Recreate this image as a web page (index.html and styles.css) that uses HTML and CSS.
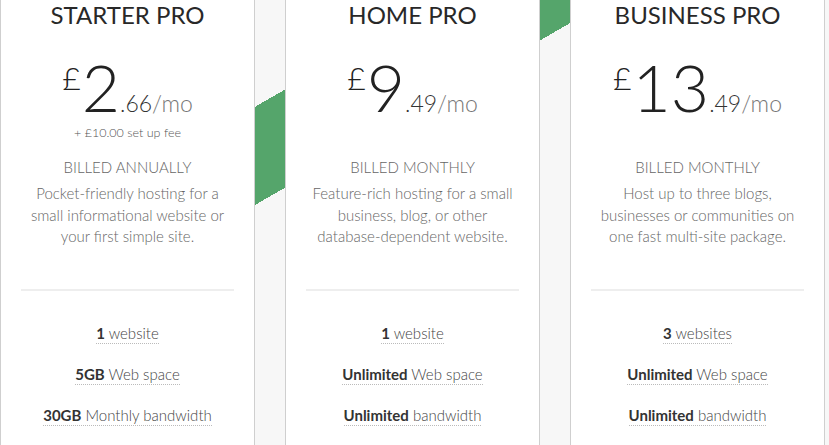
FILE: index.html
```html
<!DOCTYPE html>
<html lang="en">
<head>
<meta charset="utf-8">
<title>Pricing</title>
<link rel="stylesheet" href="styles.css">
</head>
<body>
<main class="pricing">
  <section class="plan">
    <h2 class="plan-name">STARTER PRO</h2>
    <div class="price"><span class="cur">£</span><span class="int">2</span><span class="dec">.66</span><span class="per">/mo</span></div>
    <p class="fee">+ £10.00 set up fee</p>
    <p class="billing">BILLED ANNUALLY</p>
    <p class="desc">Pocket-friendly hosting for a small informational website or your first simple site.</p>
    <hr class="divider">
    <ul class="features">
      <li><span class="feat"><b>1</b> website</span></li>
      <li><span class="feat"><b>5GB</b> Web space</span></li>
      <li><span class="feat"><b>30GB</b> Monthly bandwidth</span></li>
    </ul>
  </section>
  <section class="plan">
    <h2 class="plan-name">HOME PRO</h2>
    <div class="price"><span class="cur">£</span><span class="int">9</span><span class="dec">.49</span><span class="per">/mo</span></div>
    <p class="fee">&nbsp;</p>
    <p class="billing">BILLED MONTHLY</p>
    <p class="desc">Feature-rich hosting for a small business, blog, or other database-dependent website.</p>
    <hr class="divider">
    <ul class="features">
      <li><span class="feat"><b>1</b> website</span></li>
      <li><span class="feat"><b>Unlimited</b> Web space</span></li>
      <li><span class="feat"><b>Unlimited</b> bandwidth</span></li>
    </ul>
  </section>
  <section class="plan">
    <h2 class="plan-name">BUSINESS PRO</h2>
    <div class="price"><span class="cur">£</span><span class="int">13</span><span class="dec">.49</span><span class="per">/mo</span></div>
    <p class="fee">&nbsp;</p>
    <p class="billing">BILLED MONTHLY</p>
    <p class="desc">Host up to three blogs, businesses or communities on one fast multi-site package.</p>
    <hr class="divider">
    <ul class="features">
      <li><span class="feat"><b>3</b> websites</span></li>
      <li><span class="feat"><b>Unlimited</b> Web space</span></li>
      <li><span class="feat"><b>Unlimited</b> bandwidth</span></li>
    </ul>
  </section>
</main>
</body>
</html>
```
FILE: styles.css
```css
html, body {
  margin: 0;
  padding: 0;
}
body {
  font-family: Lato, "Open Sans", sans-serif;
  background: #f7f7f7;
}
.pricing {
  display: flex;
  gap: 30px;
  width: 829px;
  height: 445px;
  overflow: hidden;
  background-color: #f7f7f7;
  background-image: linear-gradient(150deg, transparent 220px, #55a56b 220px, #55a56b 305px, transparent 305px);
}
.plan {
  box-sizing: border-box;
  flex: 0 0 255px;
  background: #fff;
  border-left: 1px solid #cfcfcf;
  border-right: 1px solid #cfcfcf;
  padding: 0 20px;
  text-align: center;
}
.plan-name {
  margin: 0;
  font-size: 24px;
  line-height: 29px;
  font-weight: 400;
  color: #282828;
}
.price {
  margin-top: 25px;
  line-height: 65px;
  height: 65px;
  color: #222;
  white-space: nowrap;
}
.cur {
  font-size: 32px;
  font-weight: 300;
  vertical-align: 22px;
  line-height: 1;
  margin-right: 1px;
}
.int {
  font-size: 66px;
  font-weight: 300;
}
.dec {
  font-size: 23px;
  font-weight: 300;
  color: #333;
}
.per {
  font-size: 23px;
  font-weight: 300;
  color: #777;
}
.fee {
  margin: 6px 0 0;
  font-size: 12.5px;
  line-height: 16px;
  color: #555;
  font-weight: 300;
}
.billing {
  margin: 16px 0 0;
  font-size: 15px;
  line-height: 20px;
  color: #666;
  font-weight: 300;
}
.desc {
  margin: 6px 0 0;
  font-size: 15px;
  line-height: 21.5px;
  color: #666;
  font-weight: 300;
  height: 65px;
}
.divider {
  border: 0;
  height: 2px;
  background: #eee;
  margin: 41px 0 0;
}
.features {
  list-style: none;
  margin: 32px 0 0;
  padding: 0;
}
.features li {
  height: 41px;
  font-size: 15px;
  line-height: 20px;
  color: #444;
  font-weight: 300;
}
.feat {
  border-bottom: 1px dotted #bbb;
  padding-bottom: 1px;
}
.feat b {
  font-weight: 700;
  color: #333;
}
```
